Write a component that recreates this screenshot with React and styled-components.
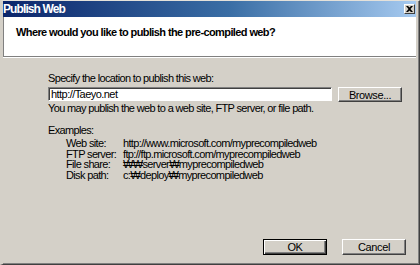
import React from "react";
import styled, { createGlobalStyle } from "styled-components";

const Global = createGlobalStyle`
    html, body {
        margin: 0;
        padding: 0;
        background: #d4d0c8;
    }
`

const Window = styled.div`
    width: 420px;
    height: 265px;
    box-sizing: border-box;
    display: flex;
    flex-direction: column;
    background: #d4d0c8;
    border-top: 1px solid #e4e1da;
    border-left: 3px solid #d4d0c8;
    border-right: 1px solid #404040;
    border-bottom: 1px solid #404040;
    box-shadow: inset -1px -1px 0 #808080;
    font-family: "Liberation Sans", Arial, sans-serif;
    font-size: 11px;
    color: #000;
    overflow: hidden;
`

const TitleBar = styled.div`
    height: 16px;
    flex-shrink: 0;
    margin: 0 3px 0 -2px;
    padding: 0 1px 0 2px;
    display: flex;
    align-items: center;
    justify-content: space-between;
    background: linear-gradient(to right, #0a246a 0%, #3a6ea5 55%, #a6caf0 100%);
`

const Title = styled.span`
    color: #fff;
    font-weight: bold;
    font-size: 12px;
    letter-spacing: -0.9px;
`

const CloseButton = styled.div`
    width: 11px;
    height: 10px;
    box-sizing: border-box;
    background: #d4d0c8;
    border-top: 1px solid #fff;
    border-left: 1px solid #fff;
    border-right: 1px solid #404040;
    border-bottom: 1px solid #404040;
    display: flex;
    align-items: center;
    justify-content: center;
`

const Header = styled.div`
    height: 40px;
    flex-shrink: 0;
    box-sizing: border-box;
    margin-right: 3px;
    background: #fff;
    border-left: 1px solid #808080;
    border-bottom: 1px solid #808080;
    box-shadow: 0 1px 0 #fff;
    padding: 9px 0 0 12px;
`

const Heading = styled.h1`
    margin: 0;
    font-size: 11px;
    line-height: 13px;
    font-weight: bold;
    letter-spacing: -0.6px;
`

const Body = styled.div`
    flex: 1;
    padding: 15px 13px 0 45px;
    display: flex;
    flex-direction: column;
`

const Text = styled.div`
    line-height: 13px;
    letter-spacing: -0.65px;
    margin-top: ${p => p.gap || 0}px;
    white-space: nowrap;
`

const LocationRow = styled.div`
    display: flex;
    align-items: flex-start;
    gap: 6px;
    margin-top: 2px;
`

const Input = styled.input`
    width: 284px;
    height: 14px;
    box-sizing: border-box;
    padding: 0 2px;
    margin: 0;
    font-family: inherit;
    font-size: 11px;
    letter-spacing: -0.55px;
    background: #fff;
    border: 1px solid;
    border-color: #808080 #fff #fff #808080;
    box-shadow: inset 1px 1px 0 #404040;
    outline: none;
`

const Button = styled.button`
    width: 64px;
    height: ${p => p.h || 16}px;
    box-sizing: border-box;
    margin: 0;
    padding: 0;
    font-family: inherit;
    font-size: 11px;
    letter-spacing: -0.4px;
    color: #000;
    background: #d4d0c8;
    border: 1px solid;
    border-color: ${p => p.primary ? "#000" : "#fff #404040 #404040 #fff"};
    box-shadow: ${p => p.primary
        ? "inset 1px 1px 0 #fff, inset -1px -1px 0 #404040, inset -2px -2px 0 #808080"
        : "inset -1px -1px 0 #808080"};
`

const Examples = styled.div`
    display: grid;
    grid-template-columns: 57px auto;
    grid-auto-rows: 10.7px;
    padding-left: 18px;
    margin-top: 1px;
    line-height: 10.7px;
    letter-spacing: -0.65px;
    white-space: nowrap;
`

const Footer = styled.div`
    display: flex;
    flex-shrink: 0;
    justify-content: flex-end;
    gap: 15px;
    padding: 0 13px 9px 0;
`

const examples = [
    ["Web site:", "http://www.microsoft.com/myprecompiledweb"],
    ["FTP server:", "ftp://ftp.microsoft.com/myprecompiledweb"],
    ["File share:", "\u20a9\u20a9server\u20a9myprecompiledweb"],
    ["Disk path:", "c:\u20a9deploy\u20a9myprecompiledweb"],
]

function App() {
    return (
        <Window>
            <Global />
            <TitleBar>
                <Title>Publish Web</Title>
                <CloseButton>
                    <svg width="7" height="6" viewBox="0 0 7 6">
                        <path d="M0 0h2l1.5 1.6L5 0h2L4.5 3 7 6H5L3.5 4.4 2 6H0l2.5-3z" fill="#000" />
                    </svg>
                </CloseButton>
            </TitleBar>
            <Header>
                <Heading>Where would you like to publish the pre-compiled web?</Heading>
            </Header>
            <Body>
                <Text>Specify the location to publish this web:</Text>
                <LocationRow>
                    <Input defaultValue="http://Taeyo.net" />
                    <Button h={15}>Browse...</Button>
                </LocationRow>
                <Text>You may publish the web to a web site, FTP server, or file path.</Text>
                <Text gap={9}>Examples:</Text>
                <Examples>
                    {examples.map(([k, v]) => (
                        <React.Fragment key={k}>
                            <span>{k}</span>
                            <span>{v}</span>
                        </React.Fragment>
                    ))}
                </Examples>
            </Body>
            <Footer>
                <Button primary>OK</Button>
                <Button>Cancel</Button>
            </Footer>
        </Window>
    );
}

export default App;
